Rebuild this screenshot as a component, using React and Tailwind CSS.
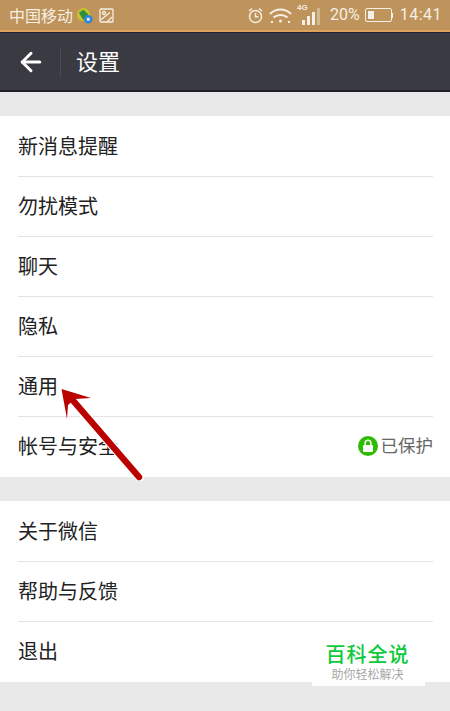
import { ArrowLeft } from 'lucide-react';

const firstGroup = ['新消息提醒', '勿扰模式', '聊天', '隐私', '通用'];
const secondGroup = ['关于微信', '帮助与反馈', '退出'];

function Row({ label, last, children }) {
  return (
    <div className="pl-[18px] pr-[17px]">
      <div className={`h-[60px] flex items-center justify-between text-[20px] text-[#222222] ${last ? 'border-b border-transparent' : 'border-b border-[#e4e4e4]'}`}>
        <span className="mb-[2px]">{label}</span>
        {children}
      </div>
    </div>
  );
}

function StatusBar() {
  return (
    <div className="h-[32px] bg-[#bf935c] border-b-2 border-[#e0a35c] flex items-center justify-between pl-[9px] pr-[8px] text-[#f6efe4]">
      <div className="flex items-center">
        <span className="text-[16px] leading-none">中国移动</span>
        <svg width="17" height="17" viewBox="0 0 18 18" className="ml-[3px]">
          <circle cx="8" cy="8" r="7" fill="#c9c22a" />
          <path d="M3 6l5-3 5 5-5 6z" fill="#2f8f3a" />
          <circle cx="13" cy="13" r="4.500" fill="#2f86d8" />
          <rect x="11.500" y="11.500" width="3" height="3" fill="#e6f0fa" />
        </svg>
        <svg width="15" height="15" viewBox="0 0 15 15" className="ml-[6px]" fill="none" stroke="currentColor" strokeWidth="1.300">
          <rect x="1" y="1" width="13" height="13" rx="1" />
          <circle cx="5" cy="5" r="1.500" />
          <path d="M1.500 12L11 4.500M8 14l5-5" />
        </svg>
      </div>
      <div className="flex items-center">
        <svg width="17" height="17" viewBox="0 0 17 17" fill="none" stroke="currentColor" strokeWidth="1.500">
          <circle cx="8.500" cy="9.500" r="6" />
          <path d="M8.500 6v3.800h3M2 4l3-2.500M15 4l-3-2.500" />
        </svg>
        <svg width="23" height="17" viewBox="0 0 23 17" className="ml-[5px]" fill="none" stroke="currentColor" strokeWidth="2">
          <path d="M1 7c6-6 15-6 21 0M4.500 10.500c4-3.500 10-3.500 14 0" />
          <circle cx="11.500" cy="14" r="1.500" fill="currentColor" stroke="none" />
          <path d="M2 15h2M19 15h2" />
        </svg>
        <div className="relative ml-[5px] w-[25px] h-[20px] flex items-end gap-[2px] pl-[5px]">
          <span className="absolute left-0 top-[-1px] text-[8px] leading-none font-bold font-['Liberation_Sans',sans-serif]">4G</span>
          <span className="w-[3px] h-[5px] bg-[#f6efe4]" />
          <span className="w-[3px] h-[9px] bg-[#f6efe4]" />
          <span className="w-[3px] h-[13px] bg-[#f6efe4]" />
          <span className="w-[3px] h-[17px] bg-[#f6efe4]/40" />
        </div>
        <span className="ml-[8px] text-[16px] leading-none font-['Roboto',sans-serif]">20%</span>
        <div className="ml-[5px] w-[27px] h-[14px] border border-[#f6efe4] rounded-[2px] p-[2px] flex">
          <span className="w-[6px] bg-[#f6efe4]" />
        </div>
        <span className="w-[1px] h-[5px] bg-[#f6efe4]" />
        <span className="ml-[7px] text-[16px] leading-none font-['Roboto',sans-serif] tracking-[0.5px]">14:41</span>
      </div>
    </div>
  );
}

export default function App() {
  return (
    <div className="relative w-[450px] h-[711px] overflow-hidden bg-[#e9e9e9] font-['Noto_Sans_CJK_SC','Noto_Sans',sans-serif]">
      <StatusBar />

      {/* Nav */}
      <div className="h-[60px] bg-[#393a42] border-t border-b-2 border-t-[#1c2333] border-b-[#1f2029] flex items-center text-white">
        <ArrowLeft size={30} strokeWidth={2.400} className="ml-[16px]" />
        <div className="ml-[14px] w-px h-[30px] bg-[#4a4b52]" />
        <span className="ml-[15px] text-[22px] leading-none mb-[4px]">设置</span>
      </div>

      <div className="mt-[24px] pt-px bg-white">
        {firstGroup.map((item) => (
          <Row key={item} label={item} />
        ))}
        <Row label="帐号与安全" last>
          <div className="flex items-center mb-[2px]">
            <span className="w-[20px] h-[20px] rounded-full bg-[#2dbd00] flex items-center justify-center">
              <svg width="12" height="14" viewBox="0 0 12 14">
                <path d="M3.200 6V4a2.800 2.800 0 0 1 5.600 0v2" fill="none" stroke="white" strokeWidth="1.500" />
                <rect x="1" y="6" width="10" height="7" rx="1" fill="white" />
              </svg>
            </span>
            <span className="ml-[3px] text-[17.5px] text-[#666666]">已保护</span>
          </div>
        </Row>
      </div>

      <div className="mt-[24px] pt-px bg-white">
        {secondGroup.map((item, i) => (
          <Row key={item} label={item} last={i === secondGroup.length - 1} />
        ))}
      </div>

      {/* Red annotation arrow */}
      <svg width="450" height="711" className="absolute left-0 top-0 pointer-events-none">
        <path d="M70 398L140 477" stroke="white" strokeWidth="9" strokeLinecap="round" />
        <path d="M70 397L139 477" stroke="#bb0000" strokeWidth="6.500" strokeLinecap="round" />
        <path d="M61.500 389L91 398L75 399L68 405L67 419Z" fill="#bb0000" />
      </svg>

      {/* Watermark */}
      <div className="absolute left-[312px] top-[640px] w-[113px] h-[46px] pr-[2px] bg-white flex flex-col items-center">
        <span className="mt-[4px] text-[20px] leading-[20px] font-medium text-[#0fc93c] tracking-[1px]">百科全说</span>
        <span className="mt-[4px] text-[12px] leading-[12px] text-[#a6a6a6]">助你轻松解决</span>
      </div>
    </div>
  );
}
